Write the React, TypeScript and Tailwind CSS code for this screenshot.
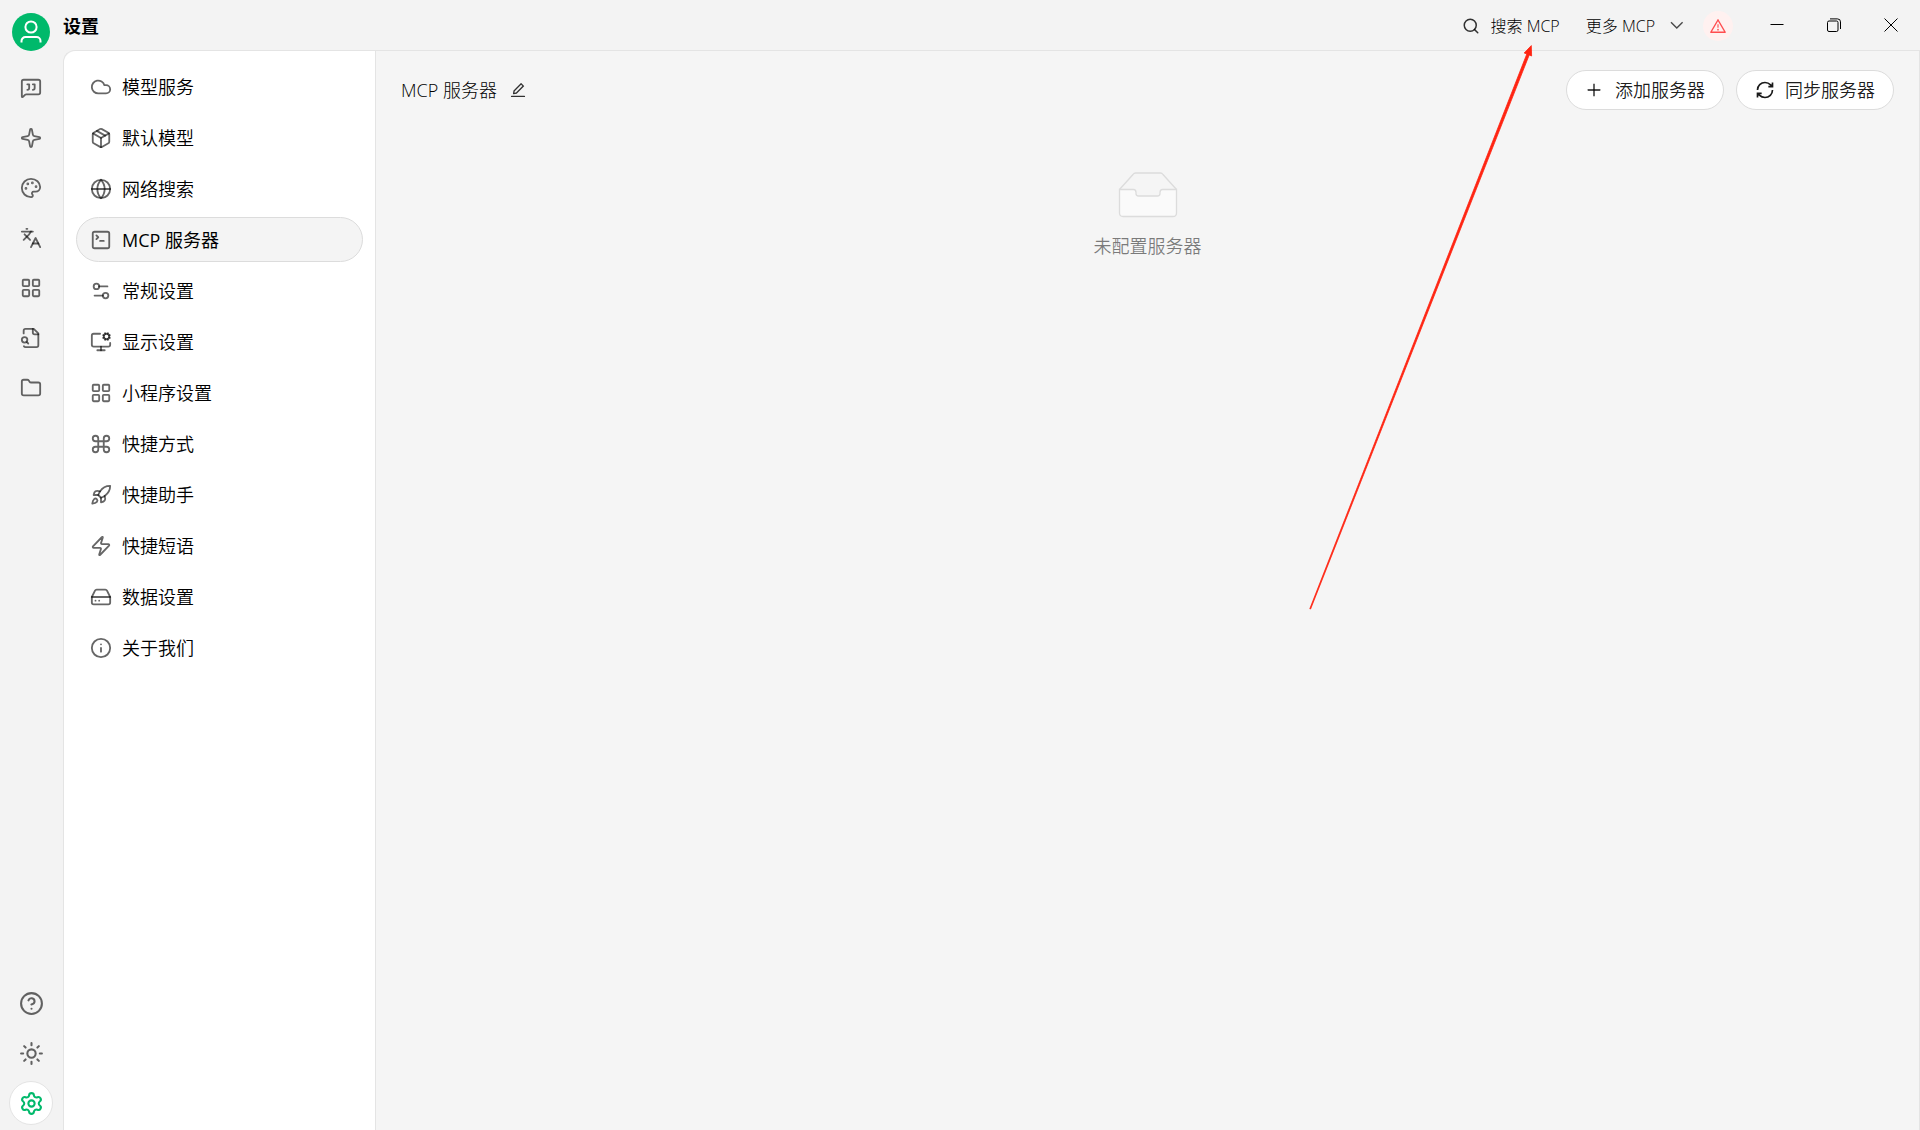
import React, { useState } from "react";
import {
  Cloud,
  Command,
  Folder,
  Globe,
  HardDrive,
  Info,
  Languages,
  LayoutGrid,
  CircleQuestionMark,
  MessageSquareQuote,
  MonitorCog,
  Package,
  Palette,
  Rocket,
  Search,
  Settings,
  Settings2,
  Sparkle,
  SquareTerminal,
  Sun,
  Zap,
} from "lucide-react";
import { AiOutlineEdit, AiOutlinePlus, AiOutlineWarning } from "react-icons/ai";

// File with a magnifier over its left edge
function FileSearch({ size = 24 }: { size?: number }) {
  return (
    <svg
      width={size}
      height={size}
      viewBox="0 0 24 24"
      fill="none"
      stroke="currentColor"
      strokeWidth="2"
      strokeLinecap="round"
      strokeLinejoin="round"
    >
      <path d="M14 2v4a2 2 0 0 0 2 2h4" />
      <path d="M4.268 21a2 2 0 0 0 1.727 1H18a2 2 0 0 0 2-2V7l-5-5H6a2 2 0 0 0-2 2v3" />
      <path d="m9 18-1.5-1.5" />
      <circle cx="5" cy="14" r="3" />
    </svg>
  );
}

const railItems = [
  { label: "助手", icon: MessageSquareQuote },
  { label: "智能体", icon: Sparkle },
  { label: "绘画", icon: Palette },
  { label: "翻译", icon: Languages },
  { label: "小程序", icon: LayoutGrid },
  { label: "知识库", icon: FileSearch },
  { label: "文件", icon: Folder },
];

const menuItems = [
  { label: "模型服务", icon: Cloud },
  { label: "默认模型", icon: Package },
  { label: "网络搜索", icon: Globe },
  { label: "MCP 服务器", icon: SquareTerminal },
  { label: "常规设置", icon: Settings2 },
  { label: "显示设置", icon: MonitorCog },
  { label: "小程序设置", icon: LayoutGrid },
  { label: "快捷方式", icon: Command },
  { label: "快捷助手", icon: Rocket },
  { label: "快捷短语", icon: Zap },
  { label: "数据设置", icon: HardDrive },
  { label: "关于我们", icon: Info },
];

function Rail() {
  return (
    <nav className="flex w-[63px] shrink-0 flex-col items-center pt-[13px] pr-px pb-[5px]">
      <button
        aria-label="用户"
        className="flex size-[38px] items-center justify-center rounded-full bg-[#00b96b] text-white"
      >
        <svg viewBox="0 0 24 24" className="size-6" fill="none" stroke="currentColor" strokeWidth="2">
          <circle cx="12" cy="7" r="5.6" />
          <path d="M2.5 22.5v-1.5a4 4 0 0 1 4-4h11a4 4 0 0 1 4 4v1.5" />
        </svg>
      </button>

      <div className="mt-[15px] flex flex-col gap-1.5">
        {railItems.map(({ label, icon: Icon }) => (
          <button
            key={label}
            aria-label={label}
            className="flex size-11 items-center justify-center rounded-full text-black/60"
          >
            <Icon size={22} />
          </button>
        ))}
      </div>

      <div className="mt-auto flex flex-col gap-1.5">
        <button aria-label="帮助" className="flex size-11 items-center justify-center text-black/60">
          <CircleQuestionMark size={25} />
        </button>
        <button aria-label="主题" className="flex size-11 items-center justify-center text-black/60">
          <Sun size={25} />
        </button>
        <button
          aria-label="设置"
          className="flex size-11 items-center justify-center rounded-full border border-[#e4e4e4] bg-white text-[#00b96b]"
        >
          <Settings size={25} />
        </button>
      </div>
    </nav>
  );
}

function TitleBar() {
  return (
    <header className="flex h-[50px] items-center">
      <h1 className="pt-0.5 text-lg font-bold">设置</h1>

      <div className="ml-auto flex items-center pt-0.5 text-base">
        <button className="flex items-center gap-2.5 font-light">
          <Search size={18} strokeWidth={2} className="text-black/80" />
          搜索 MCP
        </button>
        <button className="ml-[26px] flex items-center gap-3.5 font-light">
          更多 MCP
          <svg viewBox="0 0 16 16" className="size-4 text-black/70" fill="none" stroke="currentColor" strokeWidth="1.4">
            <path d="M2 4.2 7.8 10 13.6 4.2" />
          </svg>
        </button>
        <button
          aria-label="警告"
          className="ml-[18px] flex size-[30px] items-center justify-center rounded-full bg-[#fff1f0] text-[#ff4d4f]"
        >
          <AiOutlineWarning size={18} />
        </button>
      </div>

      <div className="ml-[15px] flex pr-px text-black">
        <button aria-label="最小化" className="flex h-[50px] w-[57px] items-center justify-center">
          <svg viewBox="0 0 14 14" className="size-3.5" stroke="currentColor" fill="none">
            <path d="M0.5 6.5h13" />
          </svg>
        </button>
        <button aria-label="还原" className="flex h-[50px] w-[57px] items-center justify-center">
          <svg viewBox="0 0 14 14" className="size-3.5" stroke="currentColor" fill="none">
            <rect x="0.5" y="3" width="10.5" height="10.5" rx="1.5" />
            <path d="M3 0.9h7.5a3 3 0 0 1 3 3V11" />
          </svg>
        </button>
        <button aria-label="关闭" className="flex h-[50px] w-[57px] items-center justify-center">
          <svg viewBox="0 0 14 14" className="size-3.5" stroke="currentColor" fill="none">
            <path d="M0.5 0.5l13 13M13.5 0.5l-13 13" />
          </svg>
        </button>
      </div>
    </header>
  );
}

function EmptyState() {
  return (
    <div className="mt-[62px] flex flex-col items-center gap-3.5 text-lg font-[350] text-black/50">
      <svg viewBox="0 0 60 46" className="h-[46px] w-[60px]" fill="none" stroke="#dcdcdc" strokeWidth="1.3">
        <path d="M1.5 17.5 15 2.5Q16 1 17.5 1h25Q44 1 45 2.5l13.5 15" />
        <path
          fill="#fafafa"
          d="M1.5 17.5h14q2.5 0 2.5 3v1q0 2.5 2.5 2.5h19q2.5 0 2.5-2.5v-1q0-3 2.5-3h14v23.5q0 3.5-3.5 3.5h-50q-3.5 0-3.5-3.5z"
        />
      </svg>
      <p>未配置服务器</p>
    </div>
  );
}

export default function App() {
  const [active, setActive] = useState("MCP 服务器");

  return (
    <div className="relative flex min-h-screen bg-[#f3f3f3] font-['Open_Sans','Noto_Sans_CJK_SC',sans-serif] text-black">
      <Rail />

      <div className="flex min-w-0 flex-1 flex-col">
        <TitleBar />

        <div className="flex flex-1 rounded-tl-xl border-t border-l border-[#e4e4e4]">
          <aside className="w-[312px] shrink-0 rounded-tl-xl border-r border-[#e4e4e4] bg-white px-3 py-[13px]">
            <ul className="flex flex-col gap-1.5">
              {menuItems.map(({ label, icon: Icon }) => (
                <li key={label}>
                  <button
                    onClick={() => setActive(label)}
                    className={`flex h-[45px] w-full items-center gap-2.5 rounded-full border px-[13px] text-lg ${
                      active === label
                        ? "border-[#dcdcdc] bg-[#f4f4f4] font-normal"
                        : "border-transparent font-[350]"
                    }`}
                  >
                    <Icon size={22} className="text-black/60" />
                    {label}
                  </button>
                </li>
              ))}
            </ul>
          </aside>

          <main className="flex-1 border-r border-[#e4e4e4] bg-[#f5f5f5] px-[25px] py-[19px]">
            <div className="flex items-center gap-2">
              <h2 className="text-lg font-light">MCP 服务器</h2>
              <button aria-label="编辑" className="p-1 text-black/80">
                <AiOutlineEdit size={18} />
              </button>
              <div className="ml-auto flex gap-3 text-lg font-[350] text-black/90">
                <button className="flex h-10 items-center gap-3 rounded-full border border-[#dcdcdc] bg-white px-[18px]">
                  <AiOutlinePlus size={18} />
                  添加服务器
                </button>
                <button className="flex h-10 items-center gap-2.5 rounded-full border border-[#dcdcdc] bg-white px-[18px]">
                  <svg
                    viewBox="0 0 24 24"
                    className="size-5"
                    fill="none"
                    stroke="currentColor"
                    strokeWidth="2"
                  >
                    <path d="M3 12a9 9 0 0 1 9-9 9.75 9.75 0 0 1 6.74 2.74L21 8M21 3v5h-5M21 12a9 9 0 0 1-9 9 9.75 9.75 0 0 1-6.74-2.74L3 16M8 16H3v5" />
                  </svg>
                  同步服务器
                </button>
              </div>
            </div>
            <EmptyState />
          </main>
        </div>
      </div>

      <svg
        viewBox="0 0 224 566"
        className="pointer-events-none absolute top-[44px] left-[1309px] h-[566px] w-[224px]"
        fill="#ff2412"
      >
        <path
          d="M0.8 564.8 217.8 10 215.2 9 222.3 1.6 222.6 12 220.2 11 1.6 565z"
          stroke="#ff2412"
          strokeWidth="0.8"
        />
      </svg>
    </div>
  );
}
